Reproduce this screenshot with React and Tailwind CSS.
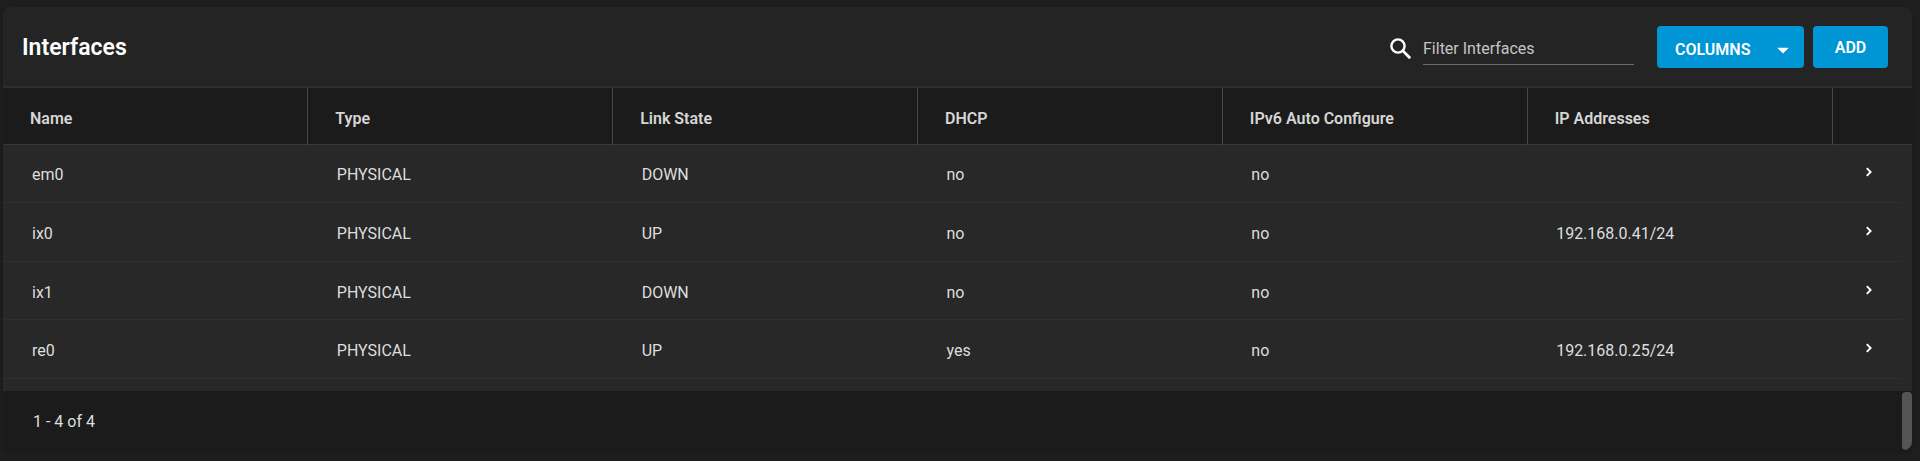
import { MdArrowDropDown } from 'react-icons/md'

const columns = ['Name', 'Type', 'Link State', 'DHCP', 'IPv6 Auto Configure', 'IP Addresses']

const interfaces = [
  { name: 'em0', type: 'PHYSICAL', state: 'DOWN', dhcp: 'no', ipv6: 'no', address: '' },
  { name: 'ix0', type: 'PHYSICAL', state: 'UP', dhcp: 'no', ipv6: 'no', address: '192.168.0.41/24' },
  { name: 'ix1', type: 'PHYSICAL', state: 'DOWN', dhcp: 'no', ipv6: 'no', address: '' },
  { name: 're0', type: 'PHYSICAL', state: 'UP', dhcp: 'yes', ipv6: 'no', address: '192.168.0.25/24' },
]

function SearchIcon() {
  return (
    <svg viewBox="0 0 22 22" className="size-[22px] text-white" fill="none" stroke="currentColor">
      <circle cx="8" cy="8" r="6.6" strokeWidth="2.4" />
      <path d="M12.6 12.6l7.6 7.6" strokeWidth="2.8" />
    </svg>
  )
}

function ChevronIcon() {
  return (
    <svg viewBox="0 0 18 18" className="size-[18px]" fill="none" stroke="currentColor">
      <path d="M6.8 5.2l3.8 3.8l-3.8 3.8" strokeWidth="1.9" />
    </svg>
  )
}

function Toolbar() {
  return (
    <header className="flex items-center justify-between h-[81px] pl-[19px] pr-6 border-b-2 border-[#2d2d2d]">
      <h1 className="pt-1 text-[23px] font-semibold text-white">Interfaces</h1>
      <div className="flex items-center">
        <label htmlFor="filter" aria-label="Filter Interfaces" className="mr-[11px] pt-1">
          <SearchIcon />
        </label>
        <input
          id="filter"
          type="text"
          placeholder="Filter Interfaces"
          className="w-[211px] h-[36px] pt-1 mr-[23px] bg-transparent border-b border-[#6b6b6b] outline-none text-[#d0d0d0] placeholder:text-[#c4c4c4]"
        />
        <button type="button" className="flex items-center justify-between w-[147px] h-[42px] pl-[18px] pr-[7px] mr-[9px] pt-1.5 rounded bg-[#0095d5] text-white font-semibold">
          COLUMNS
          <MdArrowDropDown className="size-[28px]" />
        </button>
        <button type="button" className="w-[75px] h-[42px] pt-0.5 rounded bg-[#0095d5] text-white font-semibold">
          ADD
        </button>
      </div>
    </header>
  )
}

function InterfaceRow({ item }) {
  const cells = [item.name, item.type, item.state, item.dhcp, item.ipv6, item.address]
  return (
    <tr>
      {cells.map((cell, i) => (
        <td key={columns[i]} className="pl-[29px] pt-1 border-b border-[#2f2f2f]">{cell}</td>
      ))}
      <td className="pb-0.5 border-b border-[#2f2f2f]">
        <button type="button" aria-label={`Expand ${item.name}`} className="block ml-7 text-white">
          <ChevronIcon />
        </button>
      </td>
      <td />
    </tr>
  )
}

function InterfaceTable() {
  return (
    <table className="w-full h-[291px] table-fixed text-left">
      <thead>
        <tr className="h-[56px] bg-[#1b1b1b] border-b border-[#363636]">
          {columns.map((column) => (
            <th key={column} scope="col" className="pl-[27px] pt-1.5 border-r border-[#484848] font-semibold text-[#d6d6d6]">
              {column}
            </th>
          ))}
          <th scope="col" aria-label="Details" className="w-[70px]" />
          <td className="w-2.5" />
        </tr>
      </thead>
      <tbody>
        {interfaces.map((item) => (
          <InterfaceRow key={item.name} item={item} />
        ))}
      </tbody>
    </table>
  )
}

export default function App() {
  return (
    <main className="min-h-screen pt-[7px] pl-[3px] pr-2 bg-[#1e1e1e] font-[Roboto,sans-serif] text-base text-[#dedede]">
      <section className="rounded-lg overflow-hidden bg-[#242424] shadow-md">
        <Toolbar />
        <div className="pb-3 bg-[#282828]">
          <InterfaceTable />
        </div>
        <footer className="flex justify-between h-[59px] pt-px bg-[#1b1b1b]">
          <p className="self-center pl-[30px] pt-0.5">1 - 4 of 4</p>
          <div className="w-2.5 rounded bg-[#555555]" />
        </footer>
      </section>
    </main>
  )
}
